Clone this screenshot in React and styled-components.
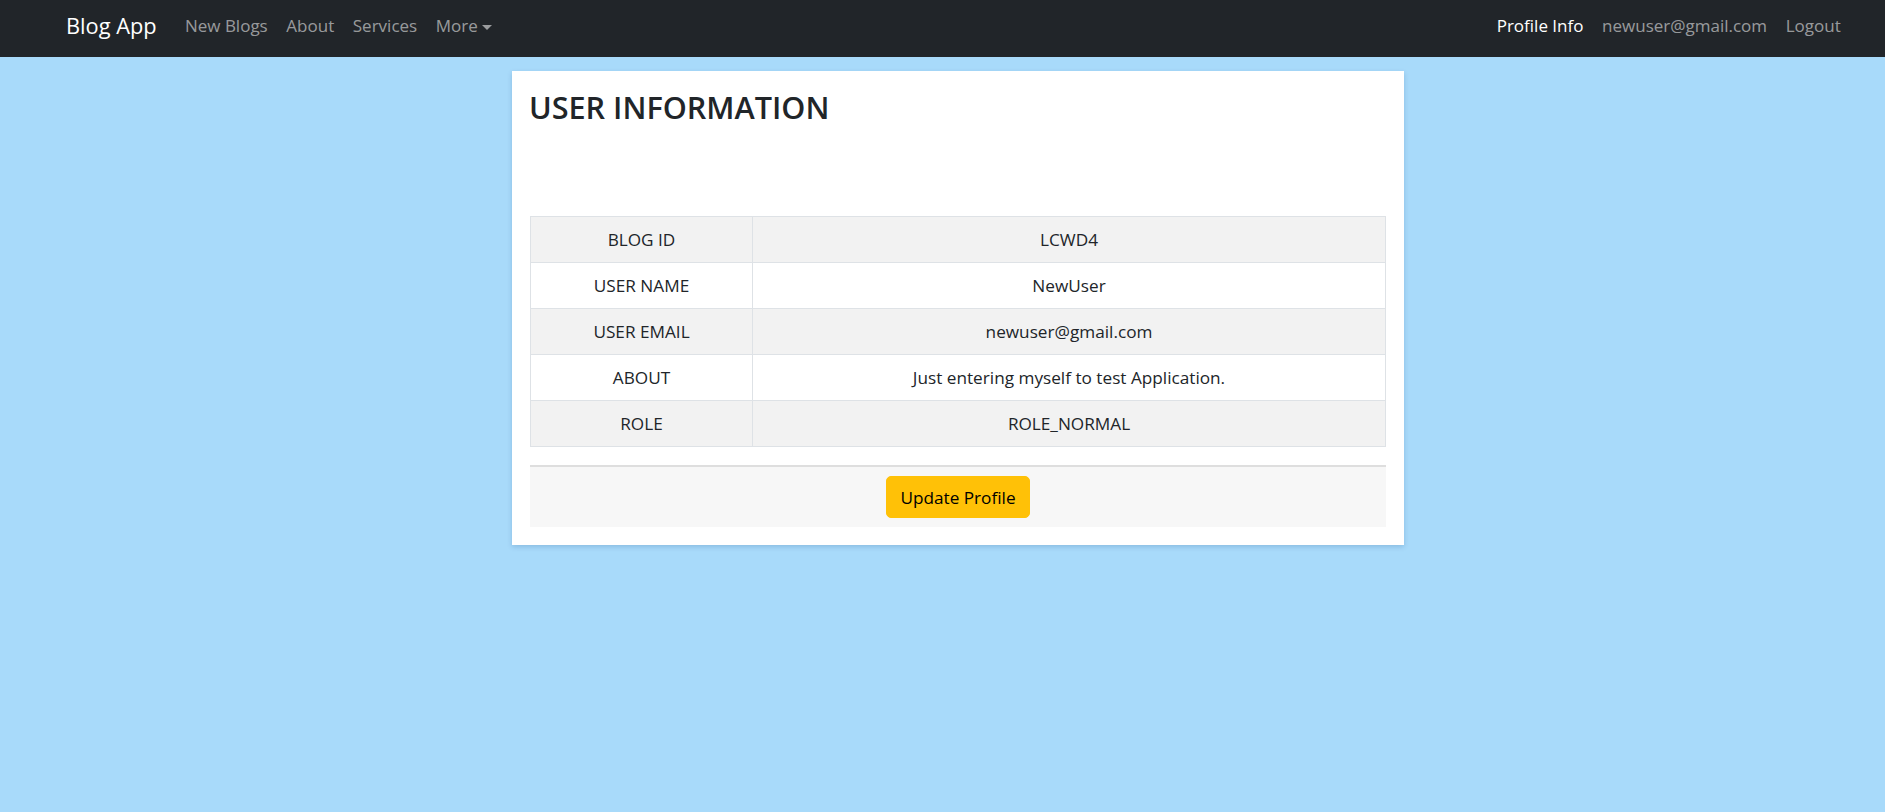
import React from 'react'
import styled, { createGlobalStyle } from 'styled-components'

const GlobalStyle = createGlobalStyle`
  html, body {
    margin: 0;
    padding: 0;
    background: #a8dafa;
    font-family: "Segoe UI", "Open Sans", "Noto Sans", sans-serif;
    color: #212529;
  }
  * { box-sizing: border-box; }
`

const NavBar = styled.nav`
  height: 57px;
  background: #212529;
  display: flex;
  align-items: center;
  justify-content: space-between;
  padding: 0 35px 5px 66px;
`

const NavGroup = styled.div`
  display: flex;
  align-items: center;
`

const Brand = styled.a`
  color: #fff;
  font-size: 21.8px;
  margin-right: 19px;
  line-height: 30px;
  cursor: pointer;
`

const NavLink = styled.a`
  color: ${props => props.active ? '#fff' : 'rgba(255,255,255,0.55)'};
  font-size: 17px;
  padding: 0 9.3px;
  line-height: 24px;
  cursor: pointer;
  display: flex;
  align-items: center;
`

const Caret = styled.span`
  display: inline-block;
  margin-left: 4px;
  margin-top: 2px;
  border-top: 5px solid rgba(255,255,255,0.55);
  border-left: 5px solid transparent;
  border-right: 5px solid transparent;
`

const Page = styled.main`
  padding: 14px 0;
`

const Card = styled.section`
  width: 892px;
  margin-left: calc(50% - 430.5px);
  background: #fff;
  padding: 14px 18px 18px 18px;
  box-shadow: 0 2px 5px rgba(0, 60, 120, 0.18);
`

const Title = styled.h2`
  margin: 0 0 0 -1px;
  font-size: 30.6px;
  font-weight: 600;
  line-height: 44px;
  color: #212529;
`

const Table = styled.table`
  width: 100%;
  margin-top: 87px;
  border-collapse: collapse;
  font-size: 17.2px;
`

const Row = styled.tr`
  background: ${props => props.striped ? '#f2f2f2' : '#fff'};
`

const Cell = styled.td`
  border: 1px solid #dee2e6;
  height: 46px;
  padding: 0 8px;
  text-align: center;
  vertical-align: middle;
  color: #212529;
  width: ${props => props.narrow ? '222px' : 'auto'};
`

const Footer = styled.div`
  margin-top: 18px;
  background: #f7f7f7;
  border-top: 2px solid #dedede;
  display: flex;
  justify-content: center;
  padding: 9px 0 9px 0;
`

const Button = styled.button`
  background: #ffc107;
  border: 1px solid #ffc107;
  border-radius: 5px;
  color: #000;
  font-family: inherit;
  font-size: 17.2px;
  height: 42px;
  padding: 0 13px;
  cursor: pointer;
`

const rows = [
  ['BLOG ID', 'LCWD4'],
  ['USER NAME', 'NewUser'],
  ['USER EMAIL', 'newuser@gmail.com'],
  ['ABOUT', 'Just entering myself to test Application.'],
  ['ROLE', 'ROLE_NORMAL'],
]

const App = () => {
  return (
    <>
      <GlobalStyle />
      <NavBar>
        <NavGroup>
          <Brand>Blog App</Brand>
          <NavLink>New Blogs</NavLink>
          <NavLink>About</NavLink>
          <NavLink>Services</NavLink>
          <NavLink>More<Caret /></NavLink>
        </NavGroup>
        <NavGroup>
          <NavLink active>Profile Info</NavLink>
          <NavLink>newuser@gmail.com</NavLink>
          <NavLink>Logout</NavLink>
        </NavGroup>
      </NavBar>
      <Page>
        <Card>
          <Title>USER INFORMATION</Title>
          <Table>
            <tbody>
              {rows.map(([label, value], i) => (
                <Row key={label} striped={i % 2 === 0}>
                  <Cell narrow>{label}</Cell>
                  <Cell>{value}</Cell>
                </Row>
              ))}
            </tbody>
          </Table>
          <Footer>
            <Button>Update Profile</Button>
          </Footer>
        </Card>
      </Page>
    </>
  )
}

export default App
